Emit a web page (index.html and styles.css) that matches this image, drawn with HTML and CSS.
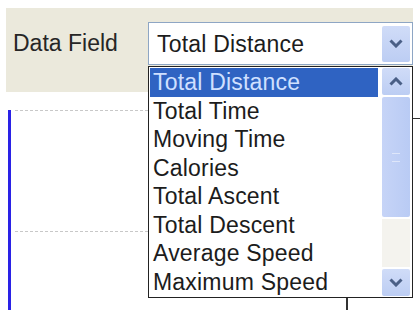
FILE: index.html
```html
<!DOCTYPE html>
<html>
<head>
<meta charset="utf-8">
<link rel="stylesheet" href="styles.css">
</head>
<body>
<div class="panel">
  <span class="label">Data Field</span>
  <div class="combo">
    <div class="select">
      <span class="value">Total Distance</span>
      <span class="btn"><svg width="14" height="9" viewBox="0 0 14 9"><path d="M1.5 1.5 L7 7 L12.5 1.5" fill="none" stroke="#4a5f86" stroke-width="3"/></svg></span>
    </div>
    <div class="list">
      <ul class="options">
        <li class="sel">Total Distance</li>
        <li>Total Time</li>
        <li>Moving Time</li>
        <li>Calories</li>
        <li>Total Ascent</li>
        <li>Total Descent</li>
        <li>Average Speed</li>
        <li>Maximum Speed</li>
      </ul>
      <div class="scroll">
        <span class="sbtn"><svg width="14" height="9" viewBox="0 0 14 9"><path d="M1.5 7.5 L7 2 L12.5 7.5" fill="none" stroke="#4a5f86" stroke-width="3"/></svg></span>
        <span class="thumb"><span class="grip"></span></span>
        <span class="track"></span>
        <span class="sbtn"><svg width="14" height="9" viewBox="0 0 14 9"><path d="M1.5 1.5 L7 7 L12.5 1.5" fill="none" stroke="#4a5f86" stroke-width="3"/></svg></span>
      </div>
    </div>
  </div>
</div>
<div class="chart">
  <div class="axis"></div>
  <div class="grid">
    <div class="gline"></div>
    <div class="gline"></div>
  </div>
  <div class="box"></div>
</div>
</body>
</html>
```

FILE: styles.css
```css
html, body {
  margin: 0;
  padding: 0;
  background: #ffffff;
  width: 420px;
  height: 310px;
  overflow: hidden;
  font-family: "Liberation Sans", Arial, sans-serif;
}
.panel {
  margin: 8px 0 0 6px;
  width: 407px;
  height: 84px;
  background: #ebe9dc;
  display: flex;
  align-items: flex-start;
  box-sizing: border-box;
  padding: 14px 0 0 7px;
}
.label {
  font-size: 23px;
  color: #262626;
  line-height: 43px;
  width: 135px;
}
.combo {
  position: relative;
  z-index: 5;
}
.select {
  width: 265px;
  height: 43px;
  box-sizing: border-box;
  border: 1px solid #8ea6c4;
  background: #fff;
  display: flex;
  align-items: center;
  justify-content: space-between;
  padding: 0 2px 0 8px;
}
.value {
  font-size: 23px;
  color: #1c1c1c;
  line-height: 28px;
  letter-spacing: 0.2px;
}
.btn, .sbtn {
  width: 28px;
  height: 36px;
  background: linear-gradient(#d0dcf8, #bccdf3);
  border-radius: 2px;
  display: flex;
  align-items: center;
  justify-content: center;
}
.list {
  position: absolute;
  left: 0;
  top: 44px;
  width: 265px;
  height: 232px;
  box-sizing: border-box;
  border: 1px solid #222;
  background: #fff;
  display: flex;
  padding: 1px 2px 1px 1px;
}
.options {
  list-style: none;
  margin: 0;
  padding: 0;
  flex: 1;
}
.options li {
  font-size: 23px;
  line-height: 28.5px;
  height: 28.5px;
  padding-left: 3px;
  color: #1c1c1c;
  white-space: nowrap;
  margin-right: 4px;
  letter-spacing: 0.2px;
}
.options li.sel {
  background: #2f63c2;
  color: #cfe0ff;
}
.scroll {
  width: 28px;
  display: flex;
  flex-direction: column;
  gap: 2px;
}
.scroll .sbtn {
  height: 27px;
}
.thumb {
  height: 120px;
  background: linear-gradient(90deg, #c6d4f7, #b9cbf4);
  border-radius: 2px;
  display: flex;
  align-items: center;
  justify-content: center;
}
.grip {
  width: 8px;
  height: 7px;
  border-top: 1px solid #e6ecfb;
  border-bottom: 1px solid #e6ecfb;
  opacity: 0.8;
}
.track {
  flex: 1;
  background: #f4f3ee;
}
.chart {
  position: relative;
  height: 218px;
  display: flex;
}
.axis {
  margin: 18px 0 0 8px;
  width: 3px;
  background: #2a22e6;
  height: 200px;
}
.grid {
  margin: 18px 0 0 4px;
  width: 133px;
  display: flex;
  flex-direction: column;
  gap: 120px;
}
.gline {
  height: 0;
  border-top: 1px dashed #c8c8c8;
}
.box {
  position: absolute;
  left: 346px;
  top: 26px;
  width: 80px;
  height: 200px;
  border-left: 2px solid #333;
  border-top: 1px solid #333;
  background: #fff;
}
```
